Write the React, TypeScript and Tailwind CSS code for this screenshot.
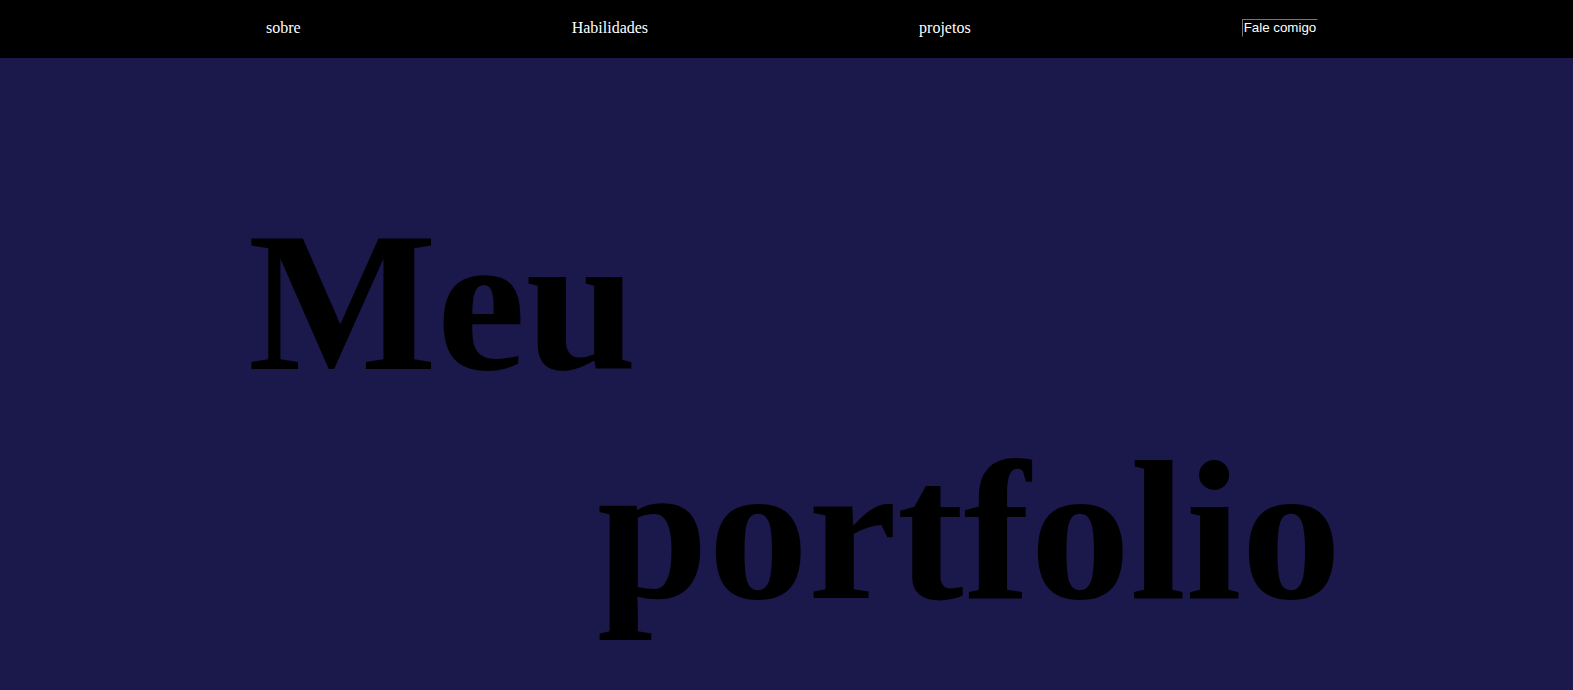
import React from "react";

const links = ["sobre", "Habilidades", "projetos"];

export default function App() {
  return (
    <div className="min-h-[690px] bg-[#1b184b] overflow-hidden">
      {/* Top navigation */}
      <nav className="h-[58px] pb-[2px] pl-[266px] bg-black flex items-center gap-[271px] font-['Liberation_Serif',serif] text-[16px] text-white">
        {links.map((l) => (
          <a key={l} href="#" className="leading-[18px]">
            {l}
          </a>
        ))}
        <button className="font-['Liberation_Sans',Arial,sans-serif] text-[13.33px] leading-[16px] text-white bg-transparent px-px border border-t-[#767676] border-l-[#767676] border-r-black border-b-black">
          Fale comigo
        </button>
      </nav>

      {/* Hero title */}
      <h1 className="pt-[129px] font-['Liberation_Serif',serif] font-bold text-[200px] leading-[229px] text-black whitespace-nowrap">
        <span className="block ml-[248px]">Meu</span>
        <span className="block ml-[597px]">portfolio</span>
      </h1>
    </div>
  );
}
